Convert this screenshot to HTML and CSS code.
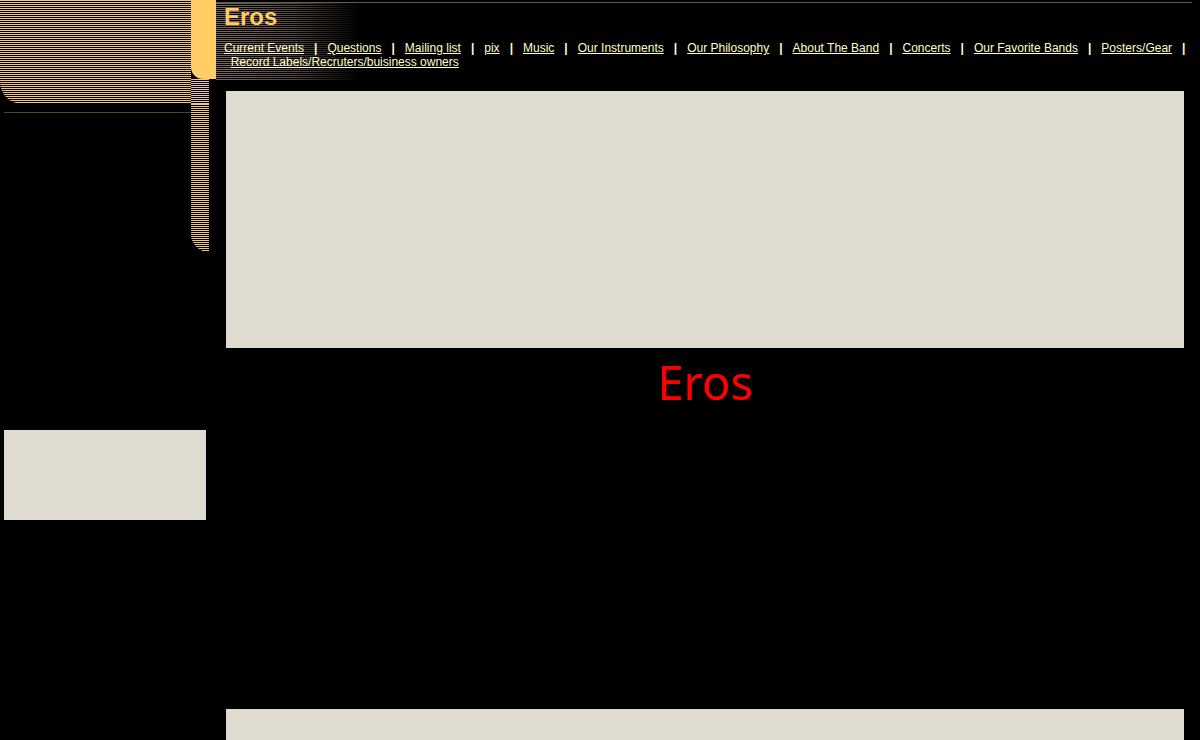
FILE: index.html
```html
<!DOCTYPE html>
<html>
<head>
<meta charset="utf-8">
<title>Eros</title>
<link rel="stylesheet" href="styles.css">
</head>
<body>
<div class="page">
  <div class="side">
    <div class="side-head">
      <div class="stripes big"></div>
      <div class="side-col">
        <div class="yellow"></div>
        <div class="stripes rail-top"></div>
      </div>
    </div>
    <div class="side-mid">
      <div class="line-area"><div class="thin-line"></div></div>
      <div class="stripes rail"></div>
    </div>
    <div class="side-box"></div>
  </div>
  <div class="main">
    <div class="header">
      <h1 class="title">Eros</h1>
      <div class="nav">
        <a href="#">Current Events</a>&nbsp;&nbsp;&nbsp;<b>|</b>&nbsp;&nbsp;&nbsp;<a href="#">Questions</a>&nbsp;&nbsp;&nbsp;<b>|</b>&nbsp;&nbsp;&nbsp;<a href="#">Mailing list</a>&nbsp;&nbsp;&nbsp;<b>|</b>&nbsp;&nbsp;&nbsp;<a href="#">pix</a>&nbsp;&nbsp;&nbsp;<b>|</b>&nbsp;&nbsp;&nbsp;<a href="#">Music</a>&nbsp;&nbsp;&nbsp;<b>|</b>&nbsp;&nbsp;&nbsp;<a href="#">Our Instruments</a>&nbsp;&nbsp;&nbsp;<b>|</b>&nbsp;&nbsp;&nbsp;<a href="#">Our Philosophy</a>&nbsp;&nbsp;&nbsp;<b>|</b>&nbsp;&nbsp;&nbsp;<a href="#">About The Band</a>&nbsp;&nbsp;&nbsp;<b>|</b>&nbsp;&nbsp;&nbsp;<a href="#">Concerts</a>&nbsp;&nbsp;&nbsp;<b>|</b>&nbsp;&nbsp;&nbsp;<a href="#">Our Favorite Bands</a>&nbsp;&nbsp;&nbsp;<b>|</b>&nbsp;&nbsp;&nbsp;<a href="#">Posters/Gear</a>&nbsp;&nbsp;&nbsp;<b>|</b><br>&nbsp;&nbsp;<a href="#">Record Labels/Recruters/buisiness owners</a>
      </div>
    </div>
    <div class="content">
      <div class="box top-box"></div>
      <div class="big-title">Eros</div>
      <div class="spacer"></div>
      <div class="box bottom-box"></div>
    </div>
  </div>
</div>
</body>
</html>
```
FILE: styles.css
```css
html, body {
  margin: 0;
  padding: 0;
  background: #000;
  height: 740px;
  overflow: hidden;
}

.page {
  display: flex;
  align-items: flex-start;
}

.stripes {
  background: repeating-linear-gradient(to bottom, #efc58d 0px, #efc58d 1px, #000 1px, #000 2px);
}

.side {
  flex: 0 0 216px;
  display: flex;
  flex-direction: column;
}

.side-head {
  display: flex;
  height: 104px;
}

.big {
  flex: 0 0 191px;
  border-bottom-left-radius: 22px;
}

.side-col {
  flex: 0 0 25px;
  display: flex;
  flex-direction: column;
}

.yellow {
  height: 79px;
  background: #ffcc66;
  border-bottom-left-radius: 12px;
}

.rail-top {
  flex: 1;
  width: 18px;
}

.side-mid {
  display: flex;
  height: 148px;
}

.line-area {
  flex: 0 0 191px;
  padding-top: 8px;
}

.thin-line {
  margin-left: 4px;
  height: 1px;
  background: #4a4538;
}

.rail {
  flex: 0 0 18px;
  border-bottom-left-radius: 18px;
}

.side-box {
  margin-top: 178px;
  margin-left: 4px;
  width: 202px;
  height: 90px;
  background: #dfdbd0;
}

.main {
  flex: 1;
  display: flex;
  flex-direction: column;
}

.header {
  height: 78px;
  border-top: 1px solid #5a5a5a;
  margin-top: 2px;
  margin-right: 8px;
  padding-left: 8px;
  background:
    linear-gradient(to right, rgba(0,0,0,0.3) 0px, rgba(0,0,0,0.55) 80px, #000 144px),
    repeating-linear-gradient(to bottom, #b89a68 0px, #b89a68 1px, #000 1px, #000 2px);
  background-size: 144px 100%, 144px 100%;
  background-repeat: no-repeat;
  box-sizing: border-box;
}

.title {
  margin: 0;
  padding-top: 1px;
  font-family: "Liberation Sans", Arial, sans-serif;
  font-weight: bold;
  font-size: 24px;
  line-height: 26px;
  color: #ffcc66;
}

.nav {
  margin-top: 11px;
  font-family: "Liberation Sans", Arial, sans-serif;
  font-size: 12px;
  line-height: 14px;
  color: #ffffcc;
}

.nav a {
  color: #ffffcc;
  text-decoration: underline;
}

.nav b {
  font-weight: bold;
}

.content {
  padding: 11px 16px 0 10px;
  display: flex;
  flex-direction: column;
}

.box {
  background: #dfdbd0;
}

.top-box {
  height: 257px;
}

.big-title {
  text-align: center;
  font-family: "Noto Sans", "Open Sans", sans-serif;
  font-size: 47px;
  line-height: 68px;
  color: #ff0000;
}

.spacer {
  height: 293px;
}

.bottom-box {
  height: 60px;
}
```
